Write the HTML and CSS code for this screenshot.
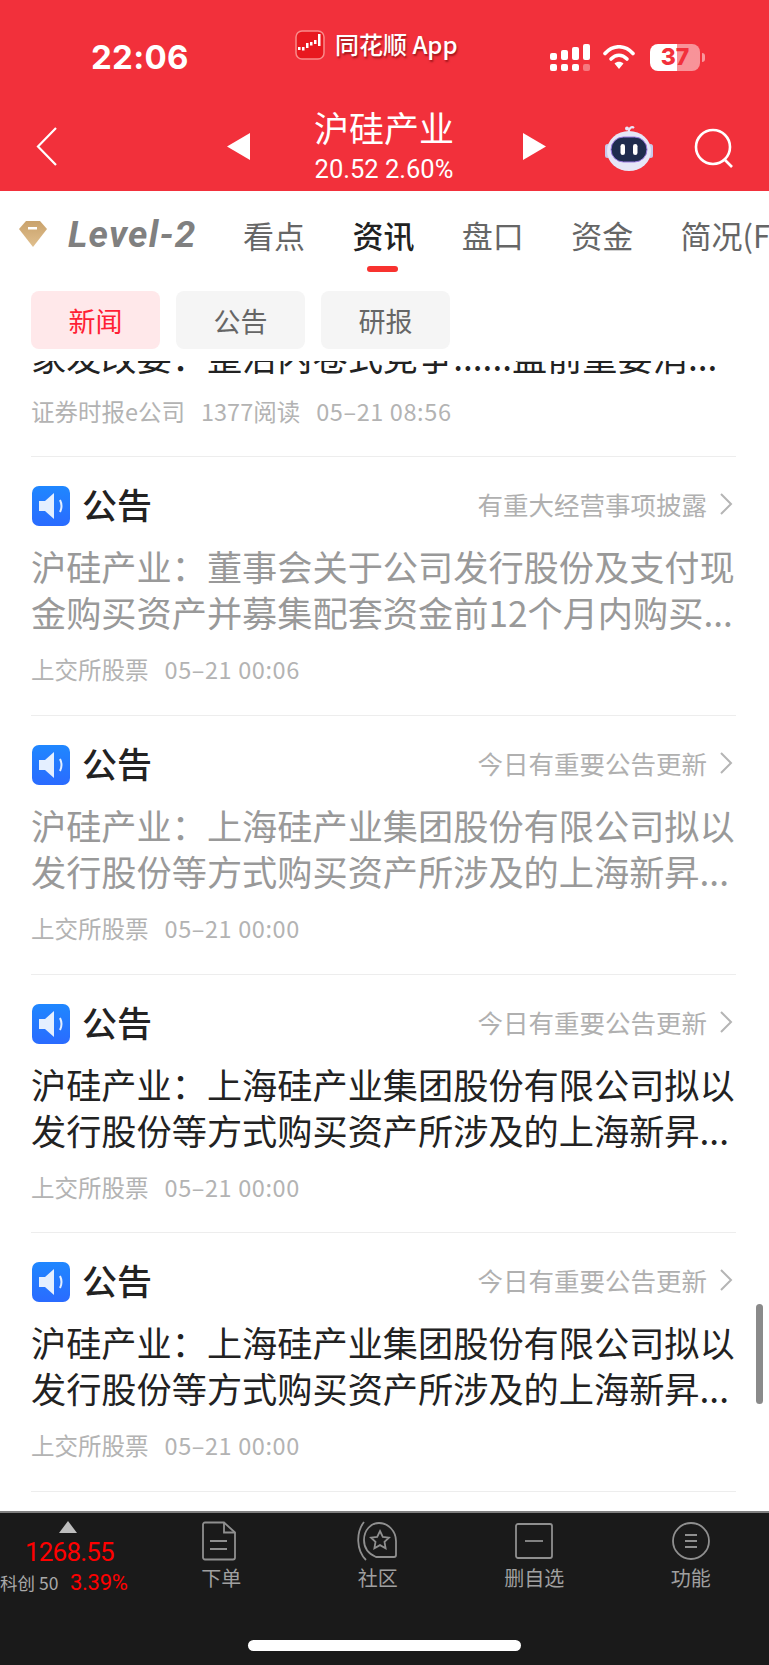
FILE: index.html
```html
<!DOCTYPE html>
<html lang="zh">
<head>
<meta charset="utf-8">
<title>沪硅产业</title>
<link rel="stylesheet" href="styles.css">
</head>
<body>
<div class="page">
  <header class="header">
    <div class="status">
      <span class="time">22:06</span>
      <div class="app">
        <svg class="app-icon" viewBox="0 0 30 30"><rect x="1" y="1" width="28" height="28" rx="6" fill="#e8181f" stroke="#f98a8a" stroke-width="1.5"/><g fill="#fff"><rect x="3" y="17" width="2.500" height="3"/><rect x="7" y="17" width="2.500" height="3.500"/><rect x="11" y="13" width="2.500" height="5"/><rect x="15" y="12" width="2.500" height="3.500"/><rect x="19" y="10" width="2.500" height="4"/><rect x="23" y="4" width="2.500" height="12"/></g></svg>
        <span class="app-name">同花顺 App</span>
      </div>
      <div class="sys">
        <svg class="signal" viewBox="0 0 40 27"><g fill="#fff"><rect x="0" y="9" width="7" height="7" rx="2"/><rect x="11" y="6" width="7" height="10" rx="2"/><rect x="22" y="3" width="7" height="13" rx="2"/><rect x="33" y="0" width="7" height="16" rx="2"/><rect x="0" y="20" width="7" height="7" rx="2"/><rect x="11" y="20" width="7" height="7" rx="2"/><rect x="22" y="20" width="7" height="7" rx="2"/><rect x="33" y="20" width="7" height="7" rx="2" opacity=".35"/></g></svg>
        <svg class="wifi" viewBox="0 0 32 24"><g fill="none" stroke="#fff" stroke-width="3.600" stroke-linecap="round"><path d="M2 8.500C10-.5 22-.5 30 8.500"/><path d="M8 14c5-5 11-5 16 0"/></g><path d="M11.500 18.500c2.500-2.500 6.500-2.500 9 0L16 24z" fill="#fff"/></svg>
        <div class="battery"><span class="battery-num">37</span></div>
        <span class="battery-nub"></span>
      </div>
    </div>
    <nav class="nav">
      <svg class="back" viewBox="0 0 21 39"><path d="M20 1 2 19.500 20 38" fill="none" stroke="#fff" stroke-width="2.200"/></svg>
      <svg class="tri tri-left" viewBox="0 0 23 27"><path d="M23 0v27L0 13.500z" fill="#fff"/></svg>
      <div class="stock">
        <div class="stock-name">沪硅产业</div>
        <div class="stock-price">20.52 2.60%</div>
      </div>
      <svg class="tri tri-right" viewBox="0 0 23 27"><path d="M0 0v27l23-13.500z" fill="#fff"/></svg>
      <svg class="robot" viewBox="0 0 48 46"><path d="M24 8c-1-5 3-7 5-5" fill="none" stroke="#e8e6f8" stroke-width="2"/><circle cx="22" cy="3.500" r="2" fill="#e8e6f8"/><rect x="0" y="19" width="5" height="14" rx="2.500" fill="#c9c8ea"/><rect x="43" y="19" width="5" height="14" rx="2.500" fill="#c9c8ea"/><ellipse cx="24" cy="26" rx="22" ry="20" fill="#e6e6f7"/><rect x="6" y="12" width="36" height="25" rx="12.500" fill="#1f2c4e" stroke="#9b7be0" stroke-width="1"/><rect x="15.500" y="19" width="4.500" height="11" rx="2.250" fill="#fff"/><rect x="28" y="19" width="4.500" height="11" rx="2.250" fill="#fff"/></svg>
      <svg class="search" viewBox="0 0 41 41"><circle cx="19" cy="19" r="17" fill="none" stroke="#fff" stroke-width="2.600"/><path d="M31 32l7 7" stroke="#fff" stroke-width="2.600" fill="none"/></svg>
    </nav>
  </header>

  <div class="tabs">
    <svg class="gem" viewBox="0 0 28 26"><defs><linearGradient id="gemfill" x1="0" y1="0" x2="0" y2="1"><stop offset="0" stop-color="#c9a26c"/><stop offset="1" stop-color="#e0bf8d"/></linearGradient></defs><path d="M7 0h14l7 8-14 18L0 8z" fill="url(#gemfill)"/><rect x="9" y="6" width="9" height="2.500" fill="#fff"/></svg>
    <span class="level">Level-2</span>
    <div class="tab-list">
      <span class="tab">看点</span>
      <span class="tab tab-active">资讯</span>
      <span class="tab">盘口</span>
      <span class="tab">资金</span>
      <span class="tab">简况(F10)</span>
    </div>
  </div>

  <div class="pills">
    <span class="pill pill-active">新闻</span>
    <span class="pill">公告</span>
    <span class="pill">研报</span>
  </div>

  <main class="feed">
    <div class="feed-inner">
      <article class="item item-cut">
        <p class="title">家发改委：整治内卷式竞争......盘前重要消...</p>
        <p class="meta"><span>证券时报e公司</span><span>1377阅读</span><span class="date">05–21 08:56</span></p>
      </article>
      <article class="item">
        <div class="head">
          <svg class="badge" viewBox="0 0 38 40"><defs><linearGradient id="bg" x1="0" y1="0" x2="0" y2="1"><stop offset="0" stop-color="#1f87ff"/><stop offset="1" stop-color="#2a6bff"/></linearGradient></defs><rect width="38" height="40" rx="7" fill="url(#bg)"/><path d="M7 15h6l9-8v26l-9-8H7z" fill="#e4efff"/><path d="M28 14c2 4 2 8 0 12" fill="none" stroke="#e4efff" stroke-width="2"/></svg>
          <span class="kind">公告</span>
          <span class="reason">有重大经营事项披露</span>
          <svg class="chev" viewBox="0 0 14 22"><path d="M2 1l10 10L2 21" fill="none" stroke="#b5b5b5" stroke-width="2"/></svg>
        </div>
        <p class="title title-read">沪硅产业：董事会关于公司发行股份及支付现金购买资产并募集配套资金前12个月内购买...</p>
        <p class="meta"><span>上交所股票</span><span class="date">05–21 00:06</span></p>
      </article>
      <article class="item">
        <div class="head">
          <svg class="badge" viewBox="0 0 38 40"><rect width="38" height="40" rx="7" fill="url(#bg)"/><path d="M7 15h6l9-8v26l-9-8H7z" fill="#e4efff"/><path d="M28 14c2 4 2 8 0 12" fill="none" stroke="#e4efff" stroke-width="2"/></svg>
          <span class="kind">公告</span>
          <span class="reason">今日有重要公告更新</span>
          <svg class="chev" viewBox="0 0 14 22"><path d="M2 1l10 10L2 21" fill="none" stroke="#b5b5b5" stroke-width="2"/></svg>
        </div>
        <p class="title title-read">沪硅产业：上海硅产业集团股份有限公司拟以发行股份等方式购买资产所涉及的上海新昇...</p>
        <p class="meta"><span>上交所股票</span><span class="date">05–21 00:00</span></p>
      </article>
      <article class="item">
        <div class="head">
          <svg class="badge" viewBox="0 0 38 40"><rect width="38" height="40" rx="7" fill="url(#bg)"/><path d="M7 15h6l9-8v26l-9-8H7z" fill="#e4efff"/><path d="M28 14c2 4 2 8 0 12" fill="none" stroke="#e4efff" stroke-width="2"/></svg>
          <span class="kind">公告</span>
          <span class="reason">今日有重要公告更新</span>
          <svg class="chev" viewBox="0 0 14 22"><path d="M2 1l10 10L2 21" fill="none" stroke="#b5b5b5" stroke-width="2"/></svg>
        </div>
        <p class="title">沪硅产业：上海硅产业集团股份有限公司拟以发行股份等方式购买资产所涉及的上海新昇...</p>
        <p class="meta"><span>上交所股票</span><span class="date">05–21 00:00</span></p>
      </article>
      <article class="item">
        <div class="head">
          <svg class="badge" viewBox="0 0 38 40"><rect width="38" height="40" rx="7" fill="url(#bg)"/><path d="M7 15h6l9-8v26l-9-8H7z" fill="#e4efff"/><path d="M28 14c2 4 2 8 0 12" fill="none" stroke="#e4efff" stroke-width="2"/></svg>
          <span class="kind">公告</span>
          <span class="reason">今日有重要公告更新</span>
          <svg class="chev" viewBox="0 0 14 22"><path d="M2 1l10 10L2 21" fill="none" stroke="#b5b5b5" stroke-width="2"/></svg>
        </div>
        <p class="title">沪硅产业：上海硅产业集团股份有限公司拟以发行股份等方式购买资产所涉及的上海新昇...</p>
        <p class="meta"><span>上交所股票</span><span class="date">05–21 00:00</span></p>
      </article>
    </div>
    <div class="scrollbar"></div>
  </main>

  <footer class="bar">
    <div class="bar-grid">
      <div class="index">
        <svg class="index-tri" viewBox="0 0 18 12"><path d="M9 0l9 12H0z" fill="#bdbdbd"/></svg>
        <div class="index-value">1268.55</div>
        <div class="index-row"><span class="index-name">科创 50</span><span class="index-pct">3.39%</span></div>
      </div>
      <div class="action">
        <svg class="action-icon" viewBox="3 0 40 40"><g fill="none" stroke="#8f8f8f" stroke-width="1.800"><path d="M5 3.500a2 2 0 0 1 2-2h19l11 10v25a2 2 0 0 1-2 2H7a2 2 0 0 1-2-2z"/><path d="M26 1.500v10h11"/><path d="M12 20h17M12 28h17"/></g></svg>
        <span class="action-label">下单</span>
      </div>
      <div class="action">
        <svg class="action-icon action-icon-wide" viewBox="0 0 44 40"><g fill="none" stroke="#8f8f8f" stroke-width="1.800"><path d="M8 1C0 11 0 29 10 39"/><path d="M20 36C13 33 8 27 8 19 8 9 15 2 23 2c9 0 17 8 17 18v14a2 2 0 0 1-2 2z"/><path d="M24 10l2.800 5.800 6.200.8-4.500 4.300 1.100 6.300-5.600-3.100-5.600 3.100 1.100-6.300-4.500-4.300 6.200-.8z"/></g></svg>
        <span class="action-label">社区</span>
      </div>
      <div class="action">
        <svg class="action-icon" viewBox="0 0 40 40"><g fill="none" stroke="#8f8f8f" stroke-width="1.800"><rect x="2" y="3" width="36" height="34" rx="2"/><path d="M11 20h18"/></g></svg>
        <span class="action-label">删自选</span>
      </div>
      <div class="action">
        <svg class="action-icon" viewBox="0 0 40 40"><g fill="none" stroke="#8f8f8f" stroke-width="1.800"><circle cx="20" cy="20" r="18"/><path d="M14 14h12M14 20h12M14 26h12"/></g></svg>
        <span class="action-label">功能</span>
      </div>
    </div>
    <div class="home"></div>
  </footer>
</div>
</body>
</html>
```

FILE: styles.css
```css
* { box-sizing: border-box; }
html, body { margin: 0; padding: 0; background: #fff; }
body { font-family: "Noto Sans CJK SC", "Noto Sans", sans-serif; }
p { margin: 0; }
svg { display: block; flex: none; }

.page { width: 769px; height: 1665px; display: flex; flex-direction: column; overflow: hidden; }

.header { height: 191px; background: #f2303b; color: #fff; flex: none; }
.status { height: 100px; display: flex; align-items: flex-start; padding: 30px 0 0 91px; }
.time { font: 700 33px/54px Inter, sans-serif; width: 204px; letter-spacing: .3px; }
.app { display: flex; align-items: flex-start; gap: 10px; height: 28px; width: 255px; }
.app-icon { width: 30px; height: 30px; }
.app-name { font-size: 24px; font-weight: 500; line-height: 28px; white-space: nowrap; text-shadow: 1px 2px 2px rgba(90, 0, 0, .55); }
.sys { display: flex; align-items: center; height: 28px; margin-top: 13px; }
.signal { width: 40px; height: 27px; }
.wifi { width: 32px; height: 24px; margin-left: 13px; }
.battery { width: 50px; height: 27px; margin-left: 15px; border-radius: 8px; background: linear-gradient(90deg, #fff 55%, rgba(255, 255, 255, .48) 55%); text-align: center; }
.battery-num { display: block; font: 800 23px/27px Inter, sans-serif; color: #f2303b; }
.battery-nub { width: 3px; height: 9px; margin-left: 2px; border-radius: 0 3px 3px 0; background: rgba(255, 255, 255, .5); }

.nav { height: 91px; display: flex; align-items: flex-start; padding-left: 36px; }
.back { width: 21px; height: 39px; margin-top: 27px; }
.tri { width: 23px; height: 27px; margin-top: 33px; }
.tri-left { margin-left: 170px; }
.stock { width: 140px; margin-left: 64px; text-align: center; white-space: nowrap; }
.stock-name { font-size: 35px; line-height: 46px; margin-top: 4px; }
.stock-price { font: 400 25.500px/30px Roboto, sans-serif; margin-top: 4px; }
.tri-right { margin-left: 69px; }
.robot { width: 48px; height: 46px; margin: 25px 0 0 59px; }
.search { width: 41px; height: 41px; margin: 28px 0 0 41px; }

.tabs { height: 100px; flex: none; display: flex; align-items: flex-start; padding: 30px 0 0 19px; overflow: hidden; }
.gem { width: 28px; height: 26px; }
.level { font: italic 700 37px/28px Roboto, sans-serif; color: #808080; margin-left: 21px; width: 175px; flex: none; letter-spacing: 1.200px; }
.tab-list { display: flex; gap: 47.400px; flex: none; }
.tab { position: relative; font-size: 31px; line-height: 28px; color: #666; white-space: nowrap; }
.tab-active { color: #222; font-weight: 500; }
.tab-active::after { content: ""; position: absolute; left: 15px; bottom: -23px; width: 31px; height: 6px; border-radius: 3px; background: #f8322f; }

.pills { flex: none; display: flex; gap: 16px; padding-left: 31px; height: 70px; }
.pill { width: 129px; height: 58px; border-radius: 8px; background: #f5f5f5; color: #666; font-size: 27px; line-height: 27px; display: flex; align-items: center; justify-content: center; }
.pill-active { background: #ffe8ea; color: #ff1f35; }

.feed { position: relative; flex: 1; overflow: hidden; }
.feed-inner { padding: 0 33px 0 31px; margin-top: -28px; }
.item { height: 258.800px; border-bottom: 1px solid #ededed; padding-top: 27px; }
.item-cut { height: 124px; padding-top: 0; }
.head { height: 40px; display: flex; align-items: center; }
.badge { width: 38px; height: 40px; margin: 4px 0 0 1px; }
.kind { font-size: 35px; line-height: 40px; color: #222; font-weight: 500; margin-left: 12px; flex: 1; }
.reason { font-size: 25.500px; color: #b0b0b0; line-height: 40px; }
.chev { width: 14px; height: 22px; margin-left: 12px; margin-right: 3px; }
.title { font-size: 35.200px; line-height: 46px; color: #222; margin-top: 19px; }
.item-cut .title { margin-top: 0; }
.title-read { color: #999; }
.meta { display: flex; gap: 16px; font-size: 23.500px; line-height: 32px; color: #b3b3b3; margin-top: 18px; white-space: nowrap; }
.item-cut .meta { margin-top: 16px; }
.date { letter-spacing: .6px; }

.scrollbar { position: absolute; left: 756px; top: 943px; width: 7px; height: 100px; border-radius: 4px; background: #8a8a8a; }

.bar { flex: none; height: 154px; background: #1a1a1a; border-top: 2px solid #808080; position: relative; }
.bar-grid { display: grid; grid-template-columns: 143px repeat(4, 156.500px); }
.index { position: relative; height: 100px; }
.index-tri { width: 18px; height: 12px; margin: 8px 0 0 59px; }
.index-value { font: 400 26px/32px Roboto, sans-serif; letter-spacing: -.8px; color: #ff0000; margin: 3px 0 0 25px; white-space: nowrap; }
.index-row { display: flex; align-items: baseline; white-space: nowrap; }
.index-name { font-size: 17.500px; line-height: 30px; color: #a8a8a8; width: 70px; }
.index-pct { font: 400 22px/30px Roboto, sans-serif; letter-spacing: -.3px; color: #ff0000; }
.action { display: flex; flex-direction: column; align-items: center; padding-top: 8px; }
.action-icon { width: 40px; height: 40px; }
.action-icon-wide { width: 44px; }
.action-label { font-size: 20px; line-height: 28px; color: #a0a0a0; margin-top: 3px; }
.home { width: 273px; height: 11px; border-radius: 6px; background: #fff; margin: 27px auto 0; }
```
